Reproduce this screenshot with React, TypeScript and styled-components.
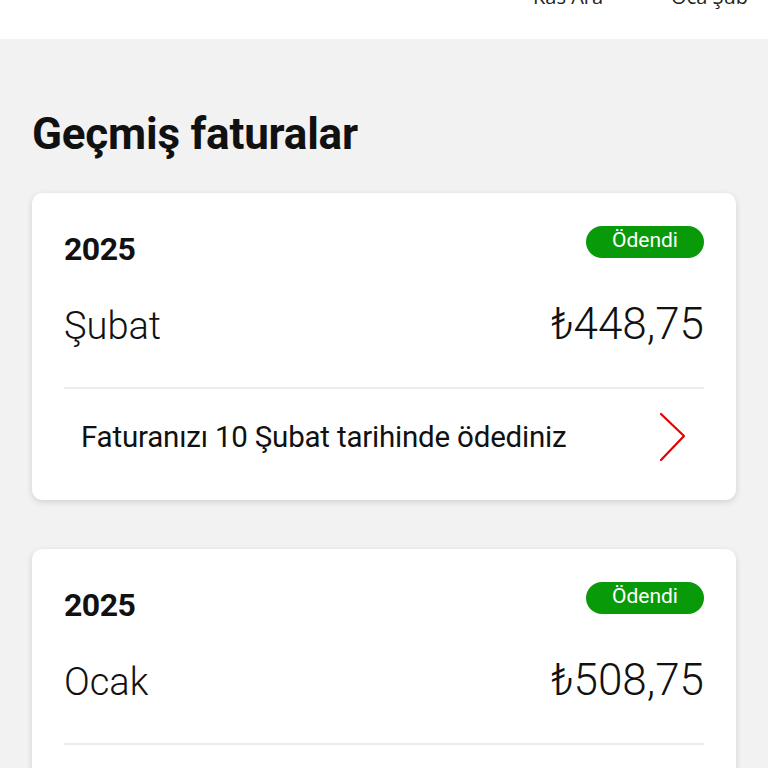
import React from "react";
import styled, { createGlobalStyle } from "styled-components";

const GlobalStyle = createGlobalStyle`
  body {
    margin: 0;
    background: #f2f2f2;
    font-family: Roboto, "Noto Sans", sans-serif;
    color: #111;
  }
`;

const ChartAxis = styled.div`
  height: 39px;
  background: #fff;
  overflow: hidden;
  display: flex;
  justify-content: flex-end;
  gap: 68px;
  padding-right: 20px;
`;

const AxisLabel = styled.span`
  font-family: "Open Sans", sans-serif;
  font-size: 20px;
  line-height: 20px;
  color: #222;
  margin-top: -13px;
`;

const Main = styled.main`
  padding: 0 32px 40px;
`;

const Title = styled.h1`
  margin: 70px 0 0;
  font-size: 44px;
  line-height: 50px;
  font-weight: 700;
  letter-spacing: -0.2px;
`;

const List = styled.div`
  display: flex;
  flex-direction: column;
  gap: 49px;
  margin-top: 34px;
`;

const Card = styled.section`
  background: #fff;
  border-radius: 10px;
  box-shadow: 0 2px 6px rgba(0, 0, 0, 0.14);
  padding: 33px 32px 15px;
`;

const TopRow = styled.div`
  display: flex;
  justify-content: space-between;
  align-items: flex-start;
`;

const Year = styled.div`
  font-size: 32px;
  line-height: 36px;
  font-weight: 700;
  margin-top: 5px;
  letter-spacing: -0.5px;
`;

const Badge = styled.span`
  display: inline-flex;
  align-items: center;
  justify-content: center;
  width: 118px;
  height: 32px;
  border-radius: 16px;
  background: #099a09;
  color: #fff;
  font-size: 21px;
  line-height: 1;
  padding-bottom: 3px;
  box-sizing: border-box;
`;

const AmountRow = styled.div`
  display: flex;
  justify-content: space-between;
  align-items: center;
  margin-top: 32px;
  padding-bottom: 38px;
  border-bottom: 2px solid #ebebeb;
`;

const Month = styled.div`
  font-size: 38px;
  line-height: 46px;
  font-weight: 300;
  margin-top: 4px;
`;

const Amount = styled.div`
  font-size: 44px;
  line-height: 50px;
  font-weight: 300;
`;

const FooterRow = styled.div`
  display: flex;
  align-items: center;
  justify-content: space-between;
  height: 96px;
  padding: 0 16px 0 17px;
`;

const Note = styled.span`
  font-size: 29.5px;
  color: #111;
  letter-spacing: -0.2px;
`;

const Chevron = () => (
  <svg width="30" height="50" viewBox="0 0 30 50" fill="none">
    <path
      d="M3 2 L26 24 L3 48"
      stroke="#e60000"
      strokeWidth="2.2"
      strokeLinecap="round"
      strokeLinejoin="round"
    />
  </svg>
);

type TInvoice = {
  year: string;
  month: string;
  amount: string;
  note?: string;
};

const invoices: TInvoice[] = [
  {
    year: "2025",
    month: "Şubat",
    amount: "₺448,75",
    note: "Faturanızı 10 Şubat tarihinde ödediniz",
  },
  {
    year: "2025",
    month: "Ocak",
    amount: "₺508,75",
    note: "Faturanızı 10 Ocak tarihinde ödediniz",
  },
];

const App = () => {
  return (
    <>
      <GlobalStyle />
      <ChartAxis>
        <AxisLabel>Kas Ara</AxisLabel>
        <AxisLabel>Oca Şub</AxisLabel>
      </ChartAxis>
      <Main>
        <Title>Geçmiş faturalar</Title>
        <List>
          {invoices.map((inv) => (
            <Card key={inv.month}>
              <TopRow>
                <Year>{inv.year}</Year>
                <Badge>Ödendi</Badge>
              </TopRow>
              <AmountRow>
                <Month>{inv.month}</Month>
                <Amount>{inv.amount}</Amount>
              </AmountRow>
              <FooterRow>
                <Note>{inv.note}</Note>
                <Chevron />
              </FooterRow>
            </Card>
          ))}
        </List>
      </Main>
    </>
  );
};

export default App;
